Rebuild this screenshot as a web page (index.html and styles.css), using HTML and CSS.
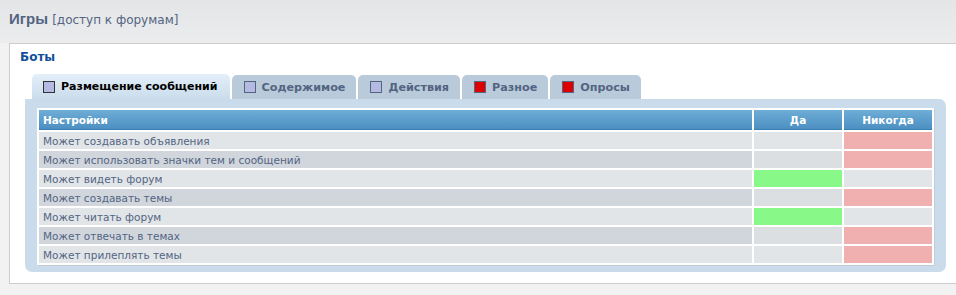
FILE: index.html
```html
<!DOCTYPE html>
<html lang="ru">
<head>
    <meta charset="UTF-8">
    <title>Права доступа</title>
    <link rel="stylesheet" href="styles.css">
</head>
<body>
    <div class="page-head">
        <h1>Игры <span class="sub">[доступ к форумам]</span></h1>
    </div>
    <div class="panel">
        <h3 class="group">Боты</h3>
        <ul class="tabs">
            <li class="tab active"><span class="box"></span>Размещение сообщений</li>
            <li class="tab"><span class="box"></span>Содержимое</li>
            <li class="tab"><span class="box"></span>Действия</li>
            <li class="tab"><span class="box red"></span>Разное</li>
            <li class="tab"><span class="box red"></span>Опросы</li>
        </ul>
        <div class="tab-body">
            <table class="perms">
                <thead>
                    <tr><th class="name">Настройки</th><th>Да</th><th>Никогда</th></tr>
                </thead>
                <tbody>
                    <tr class="row1"><td class="name">Может создавать объявления</td><td class="yes"></td><td class="never on"></td></tr>
                    <tr class="row2"><td class="name">Может использовать значки тем и сообщений</td><td class="yes"></td><td class="never on"></td></tr>
                    <tr class="row1"><td class="name">Может видеть форум</td><td class="yes on"></td><td class="never"></td></tr>
                    <tr class="row2"><td class="name">Может создавать темы</td><td class="yes"></td><td class="never on"></td></tr>
                    <tr class="row1"><td class="name">Может читать форум</td><td class="yes on"></td><td class="never"></td></tr>
                    <tr class="row2"><td class="name">Может отвечать в темах</td><td class="yes"></td><td class="never on"></td></tr>
                    <tr class="row1"><td class="name">Может прилеплять темы</td><td class="yes"></td><td class="never on"></td></tr>
                </tbody>
            </table>
        </div>
    </div>
</body>
</html>
```

FILE: styles.css
```css
body {
    margin: 0;
    background-color: #f2f2f2;
    font-family: "DejaVu Sans", Verdana, sans-serif;
    color: #536482;
    overflow: hidden;
}

.page-head {
    background: linear-gradient(#e4e5e7, #ebeced);
    padding: 9px 9px 0 9px;
    height: 34px;
}
.page-head h1 {
    margin: 0;
    font-family: "Liberation Sans", Arial, sans-serif;
    font-size: 15px;
    line-height: 20px;
    font-weight: bold;
    color: #536482;
}
.page-head .sub {
    font-family: "DejaVu Sans", Verdana, sans-serif;
    font-size: 12px;
    font-weight: normal;
}

.panel {
    margin-left: 9px;
    background-color: #fff;
    border: 1px solid #cccccc;
    border-right: none;
    padding: 6px 10px 11px 10px;
}
.group {
    margin: 0 0 10px 0;
    font-size: 12px;
    font-weight: bold;
    color: #115098;
}

.tabs {
    list-style: none;
    margin: 0 0 0 12px;
    padding: 0;
    display: flex;
    gap: 2px;
}
.tab {
    display: flex;
    align-items: center;
    height: 24px;
    margin-top: 1px;
    padding: 0 11px 0 12px;
    background-color: #b9cbda;
    border-radius: 5px 5px 0 0;
    font-size: 11.2px;
    font-weight: bold;
    color: #536482;
}
.tab.active {
    height: 25px;
    margin-top: 0;
    padding: 0 12px 0 11px;
    background: linear-gradient(#e3effa, #cadceb);
    color: #000;
    font-size: 11px;
}
.box {
    width: 10px;
    height: 10px;
    border: 1px solid #536482;
    background-color: #b4bae1;
    margin-right: 6px;
}
.tab.active .box {
    border-color: #333;
}
.box.red {
    background-color: #dd0000;
}

.tab-body {
    margin-left: 5px;
    background-color: #cadceb;
    border-radius: 7px;
    border-top-left-radius: 0;
    padding: 8px 13px 7px 11px;
}

.perms {
    width: 100%;
    border-collapse: separate;
    border-spacing: 2px;
    background-color: #fff;
    margin: 1px 0 0 1px;
    box-shadow: 1px 1px 0 #c3ccd6;
}
.perms th {
    height: 19px;
    padding: 0 4px;
    background: linear-gradient(#6eadd6, #4c8fc2);
    border-bottom: 1px solid #3a7fb4;
    color: #fff;
    font-size: 10.5px;
    font-weight: bold;
    text-align: center;
    width: 80px;
}
.perms th.name {
    text-align: left;
    width: auto;
}
.perms td {
    height: 17px;
    padding: 0 4px;
    font-size: 10.5px;
}
.row1 td { background-color: #e1e5e8; }
.row2 td { background-color: #d1d6dd; }
.row1 td.yes, .row1 td.never { background-color: #e1e5e8; }
.row2 td.yes, .row2 td.never { background-color: #dcdfe2; }
td.yes.on { background-color: #88f888; }
td.never.on { background-color: #f0b0b0; }
```
